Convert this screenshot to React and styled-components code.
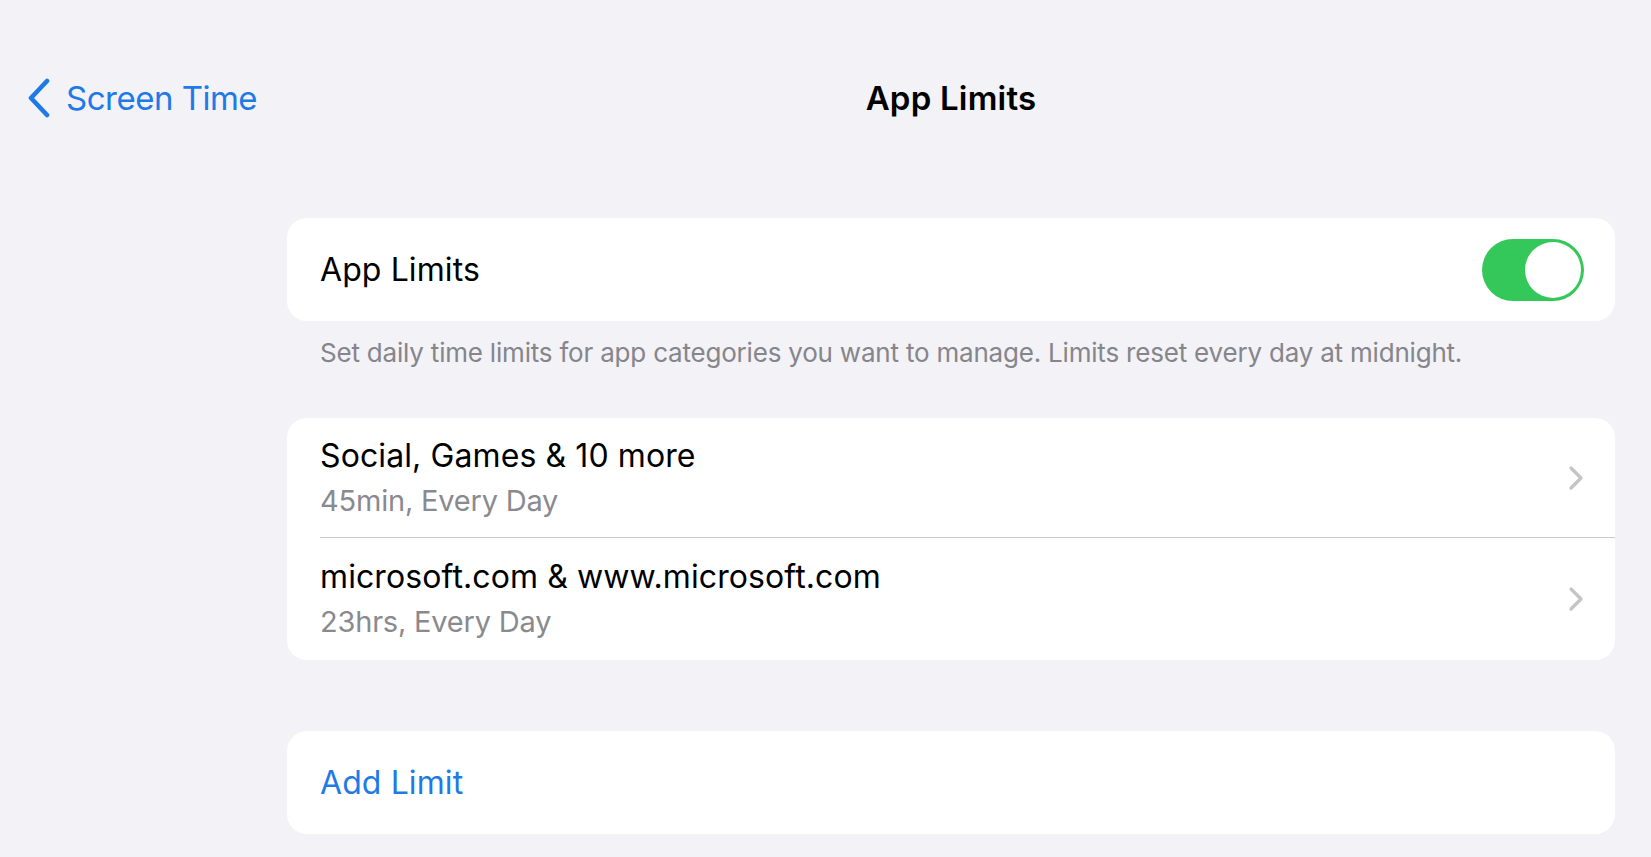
import styled, { createGlobalStyle } from "styled-components";

const GlobalStyle = createGlobalStyle`
  html, body {
    margin: 0;
    padding: 0;
    background: #f2f2f7;
  }
  body {
    font-family: "Inter", "Liberation Sans", sans-serif;
    -webkit-font-smoothing: antialiased;
  }
`;

const Page = styled.div`
  min-height: 857px;
  background: #f2f2f7;
  overflow: hidden;
`;

const NavBar = styled.header`
  display: grid;
  grid-template-columns: 287px 1fr 36px;
  align-items: start;
  height: 218px;
  padding-top: 78px;
  box-sizing: border-box;
`;

const BackButton = styled.button`
  display: flex;
  align-items: center;
  gap: 15px;
  padding: 0 0 0 27px;
  border: none;
  background: none;
  color: #1f7ae6;
  font-family: inherit;
  font-size: 33px;
  letter-spacing: -0.5px;
  height: 40px;
  cursor: pointer;
`;

const Title = styled.h1`
  margin: 0;
  text-align: center;
  font-size: 33px;
  font-weight: 600;
  letter-spacing: 0.2px;
  color: #000;
  line-height: 40px;
`;

const Content = styled.main`
  display: flex;
  flex-direction: column;
  margin: 0 36px 0 287px;
`;

const Card = styled.section`
  background: #fff;
  border-radius: 20px;
  overflow: hidden;
  margin-bottom: ${(p) => p.$gap || 0}px;
`;

const Row = styled.div`
  display: flex;
  align-items: center;
  justify-content: space-between;
  height: ${(p) => p.$h || 103}px;
  padding: 0 31px 0 33px;
  box-sizing: border-box;
  position: relative;
  ${(p) =>
    p.$divider &&
    `
    &::after {
      content: "";
      position: absolute;
      left: 33px;
      right: 0;
      bottom: 0;
      height: 1px;
      background: #c8c8cc;
    }
  `}
`;

const Label = styled.span`
  font-size: 32px;
  letter-spacing: 0.1px;
  color: ${(p) => (p.$link ? "#1f7ae6" : "#000")};
`;

const TextStack = styled.div`
  display: flex;
  flex-direction: column;
  gap: 8px;
  padding-bottom: 2px;
`;

const Sub = styled.span`
  font-size: 29px;
  letter-spacing: -0.2px;
  color: #8a8a8e;
`;

const Footer = styled.p`
  margin: 0;
  padding: 16px 33px 0;
  height: 97px;
  box-sizing: border-box;
  font-size: 26px;
  letter-spacing: -0.2px;
  color: #85858b;
`;

const Toggle = styled.div`
  width: 102px;
  height: 62px;
  border-radius: 31px;
  background: #34c759;
  display: flex;
  align-items: center;
  justify-content: flex-end;
  padding: 0 3px;
  box-sizing: border-box;
`;

const Knob = styled.div`
  width: 56px;
  height: 56px;
  border-radius: 50%;
  background: #fff;
`;

const Chevron = () => (
  <svg width="16" height="26" viewBox="0 0 16 26">
    <path
      d="M3 3 L13 13 L3 23"
      fill="none"
      stroke="#c4c4c7"
      strokeWidth="3.2"
      strokeLinecap="round"
      strokeLinejoin="round"
    />
  </svg>
);

const BackChevron = () => (
  <svg width="24" height="40" viewBox="0 0 24 40">
    <path
      d="M20 3 L4 20 L20 37"
      fill="none"
      stroke="#1f7ae6"
      strokeWidth="4.6"
      strokeLinecap="round"
      strokeLinejoin="round"
    />
  </svg>
);

const limits = [
  { title: "Social, Games & 10 more", sub: "45min, Every Day" },
  { title: "microsoft.com & www.microsoft.com", sub: "23hrs, Every Day" },
];

export default function App() {
  return (
    <Page>
      <GlobalStyle />
      <NavBar>
        <BackButton>
          <BackChevron />
          Screen Time
        </BackButton>
        <Title>App Limits</Title>
        <div />
      </NavBar>
      <Content>
        <Card>
          <Row>
            <Label>App Limits</Label>
            <Toggle>
              <Knob />
            </Toggle>
          </Row>
        </Card>
        <Footer>
          Set daily time limits for app categories you want to manage. Limits
          reset every day at midnight.
        </Footer>
        <Card $gap={71}>
          {limits.map((l, i) => (
            <Row key={l.title} $h={i === 0 ? 120 : 122} $divider={i === 0}>
              <TextStack>
                <Label>{l.title}</Label>
                <Sub>{l.sub}</Sub>
              </TextStack>
              <Chevron />
            </Row>
          ))}
        </Card>
        <Card>
          <Row>
            <Label $link>Add Limit</Label>
          </Row>
        </Card>
      </Content>
    </Page>
  );
}
